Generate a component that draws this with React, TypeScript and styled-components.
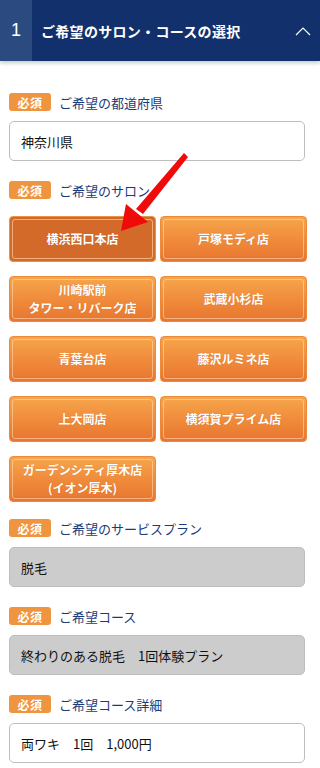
import React, {useState} from 'react';
import styled, {createGlobalStyle, css} from 'styled-components';

const GlobalStyle = createGlobalStyle`
    html, body {
        margin: 0;
        padding: 0;
        background: #ffffff;
    }
    body {
        font-family: 'Noto Sans CJK JP', 'Noto Sans', 'Liberation Sans', sans-serif;
        -webkit-font-smoothing: antialiased;
    }
`;

const Page = styled.div`
    position: relative;
    width: 320px;
    min-height: 768px;
    background: #ffffff;
`;

const Header = styled.div`
    display: flex;
    align-items: stretch;
    height: 61px;
    background: #12306b;
    box-shadow: 0 2px 4px rgba(0, 0, 0, 0.22);
    color: #ffffff;
`;

const StepNumber = styled.div`
    display: flex;
    align-items: center;
    justify-content: center;
    width: 32px;
    background: #2b4a80;
    font-family: 'Liberation Sans', 'Noto Sans', sans-serif;
    font-size: 18px;
`;

const HeaderTitle = styled.div`
    flex: 1;
    display: flex;
    align-items: center;
    padding-left: 9px;
    font-size: 14px;
    font-weight: 700;
    letter-spacing: 0.3px;
`;

const Chevron = styled.div`
    display: flex;
    align-items: center;
    padding-right: 9px;
`;

const Body = styled.div`
    padding: 32px 15px 20px 9px;
`;

const Field = styled.div`
    display: flex;
    flex-direction: column;
    margin-bottom: 20px;
`;

const LabelRow = styled.div<{$gap?: number}>`
    display: flex;
    align-items: center;
    height: 18px;
    margin-bottom: ${(p) => p.$gap ?? 10}px;
`;

const Badge = styled.span`
    display: inline-flex;
    align-items: center;
    justify-content: center;
    width: 42px;
    height: 18px;
    border-radius: 3px;
    background: #f0953f;
    color: #ffffff;
    font-size: 12px;
    font-weight: 700;
    letter-spacing: 0.5px;
`;

const LabelText = styled.span`
    margin-left: 8px;
    color: #1b3b78;
    font-size: 13px;
`;

const Box = styled.div<{$disabled?: boolean}>`
    display: flex;
    align-items: center;
    box-sizing: border-box;
    height: 40px;
    padding: 0 11px;
    border: 1px solid #bdbdbd;
    border-radius: 5px;
    font-size: 13px;
    color: #111111;
    background: ${(p) => (p.$disabled ? '#cccccc' : '#ffffff')};
    white-space: pre;
`;

const SalonGrid = styled.div`
    display: grid;
    grid-template-columns: 147px 147px;
    grid-auto-rows: 46px;
    column-gap: 4px;
    row-gap: 14px;
    margin-bottom: 17px;
`;

const SalonButton = styled.button<{$active?: boolean}>`
    position: relative;
    box-sizing: border-box;
    display: flex;
    align-items: center;
    justify-content: center;
    padding: 0 4px;
    border: 1px solid #ec8a3c;
    border-radius: 4px;
    background: linear-gradient(to bottom, #f6a64b 0%, #f08c3c 50%, #e8752f 100%);
    color: #ffffff;
    font-family: inherit;
    font-size: 12px;
    font-weight: 700;
    line-height: 18px;
    text-align: center;
    text-shadow: 0 0 1px rgba(160, 70, 10, 0.35);
    cursor: pointer;

    &::after {
        content: '';
        position: absolute;
        inset: 2px;
        border: 1px solid rgba(255, 225, 190, 0.55);
        border-radius: 3px;
        pointer-events: none;
    }

    ${(p) =>
        p.$active &&
        css`
            border-color: #e59447;
            background: #d46a2a;

            &::after {
                border-color: rgba(250, 200, 150, 0.75);
            }
        `}
`;

const Arrow = styled.svg`
    position: absolute;
    left: 0;
    top: 0;
    pointer-events: none;
`;

const salons = [
    '横浜西口本店',
    '戸塚モディ店',
    '川崎駅前\nタワー・リバーク店',
    '武蔵小杉店',
    '青葉台店',
    '藤沢ルミネ店',
    '上大岡店',
    '横須賀プライム店',
    'ガーデンシティ厚木店\n(イオン厚木)',
];

const App = () => {
    const [selected, setSelected] = useState(0);

    return (
        <Page>
            <GlobalStyle/>
            <Header>
                <StepNumber>1</StepNumber>
                <HeaderTitle>ご希望のサロン・コースの選択</HeaderTitle>
                <Chevron>
                    <svg width='16' height='10' viewBox='0 0 16 10'>
                        <polyline
                            points='1,9 8,2 15,9'
                            fill='none'
                            stroke='#ffffff'
                            strokeWidth='1.2'
                        />
                    </svg>
                </Chevron>
            </Header>
            <Body>
                <Field>
                    <LabelRow>
                        <Badge>必須</Badge>
                        <LabelText>ご希望の都道府県</LabelText>
                    </LabelRow>
                    <Box>神奈川県</Box>
                </Field>
                <LabelRow $gap={17}>
                    <Badge>必須</Badge>
                    <LabelText>ご希望のサロン</LabelText>
                </LabelRow>
                <SalonGrid>
                    {salons.map((name, i) => (
                        <SalonButton
                            key={name}
                            $active={i === selected}
                            onClick={() => setSelected(i)}
                        >
                            <span>
                                {name.split('\n').map((line, j) => (
                                    <React.Fragment key={line}>
                                        {j > 0 && <br/>}
                                        {line}
                                    </React.Fragment>
                                ))}
                            </span>
                        </SalonButton>
                    ))}
                </SalonGrid>
                <Field>
                    <LabelRow>
                        <Badge>必須</Badge>
                        <LabelText>ご希望のサービスプラン</LabelText>
                    </LabelRow>
                    <Box $disabled={true}>脱毛</Box>
                </Field>
                <Field>
                    <LabelRow>
                        <Badge>必須</Badge>
                        <LabelText>ご希望コース</LabelText>
                    </LabelRow>
                    <Box $disabled={true}>{'終わりのある脱毛　1回体験プラン'}</Box>
                </Field>
                <Field>
                    <LabelRow>
                        <Badge>必須</Badge>
                        <LabelText>ご希望コース詳細</LabelText>
                    </LabelRow>
                    <Box>{'両ワキ　1回　1,000円'}</Box>
                </Field>
            </Body>
            <Arrow width='320' height='768' viewBox='0 0 320 768'>
                <polygon
                    points='184,153 188,157 143,214 136,209'
                    fill='#f00a0a'
                />
                <polygon
                    points='121,231 126,204 148,222'
                    fill='#f00a0a'
                />
            </Arrow>
        </Page>
    );
};

export default App;
